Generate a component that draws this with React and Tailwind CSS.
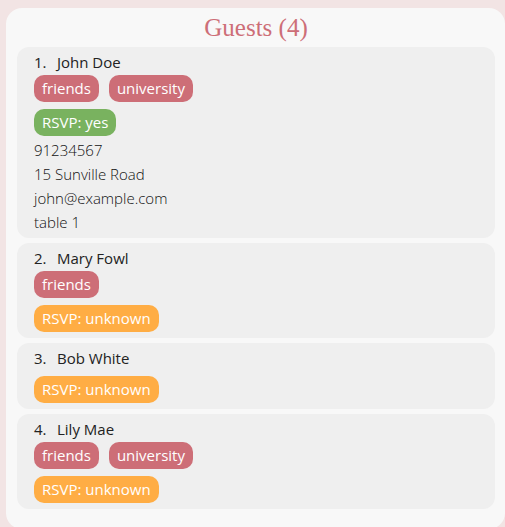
import React from "react";

const guests = [
  {
    name: "John Doe",
    tags: ["friends", "university"],
    rsvp: "yes",
    details: ["91234567", "15 Sunville Road", "john@example.com", "table 1"],
  },
  { name: "Mary Fowl", tags: ["friends"], rsvp: "unknown", details: [] },
  { name: "Bob White", tags: [], rsvp: "unknown", details: [] },
  { name: "Lily Mae", tags: ["friends", "university"], rsvp: "unknown", details: [] },
];

const rsvpClass = {
  yes: "bg-[#79b25f]",
  unknown: "bg-[#ffad44]",
};

const Pill = ({ className, children }) => (
  <span className={`inline-flex items-center h-[27px] px-2 rounded-[10px] text-[15px] text-white ${className}`}>
    {children}
  </span>
);

const GuestCard = ({ guest, index }) => (
  <div className="bg-[#efefef] rounded-[12px] pt-[5px] pb-[6px] pl-[17px] pr-3">
    <div className="flex h-5 items-center text-[15px] text-[#222]">
      <span className="w-[23px]">{index + 1}.</span>
      <span>{guest.name}</span>
    </div>
    {guest.tags.length > 0 ? (
      <div className="flex gap-[10px] mt-[3px]">
        {guest.tags.map((t) => (
          <Pill key={t} className="bg-[#cd6e77]">{t}</Pill>
        ))}
      </div>
    ) : (
      <div className="h-[1px]" />
    )}
    <div className="flex mt-[7px]">
      <Pill className={rsvpClass[guest.rsvp]}>RSVP: {guest.rsvp}</Pill>
    </div>
    {guest.details.length > 0 && (
      <div className="mt-[2px] -mb-[2px] text-[15px] font-light text-[#111]">
        {guest.details.map((d) => (
          <div key={d} className="h-6 flex items-center">{d}</div>
        ))}
      </div>
    )}
  </div>
);

export default function App() {
  return (
    <div className="h-[527px] bg-[#f2e4e4] pt-2 pl-[6px] overflow-hidden" style={{ fontFamily: '"Open Sans", sans-serif' }}>
      <div className="bg-[#f8f8f8] rounded-[16px] h-[521px] pl-[11px] pr-[10px]">
        <h1 className="text-center text-[25px] leading-[39px] text-[#cd6e77]" style={{ fontFamily: '"Liberation Serif", serif' }}>
          Guests ({guests.length})
        </h1>
        <div className="flex flex-col gap-[5px]">
          {guests.map((g, i) => (
            <GuestCard key={g.name} guest={g} index={i} />
          ))}
        </div>
      </div>
    </div>
  );
}
